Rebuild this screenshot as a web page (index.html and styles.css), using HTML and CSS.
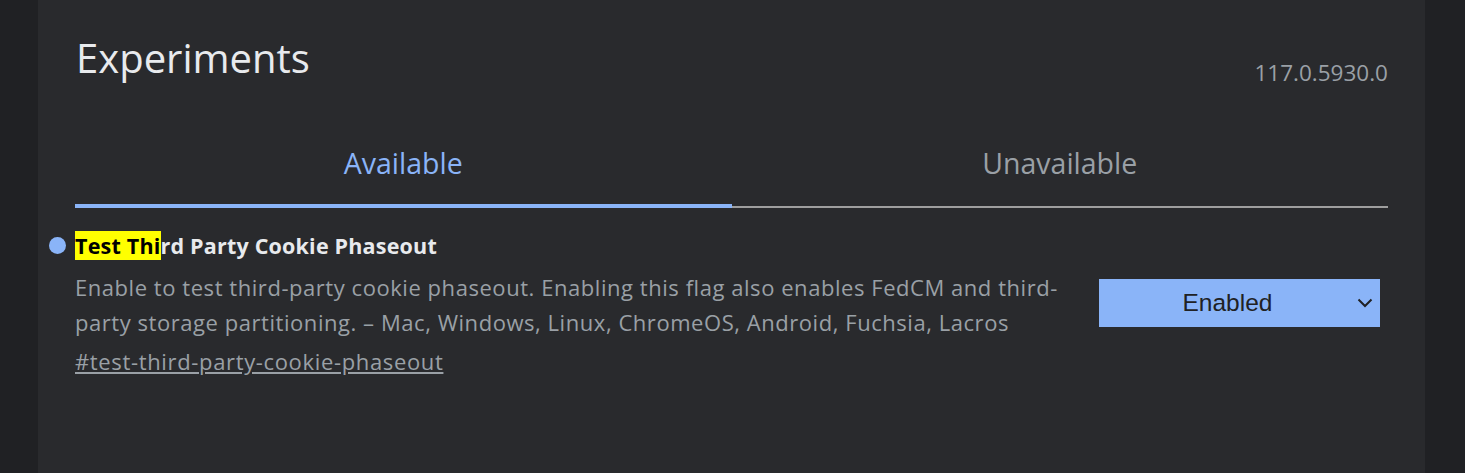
FILE: index.html
```html
<!DOCTYPE html>
<html>
<head>
<meta charset="utf-8">
<link rel="stylesheet" href="styles.css">
</head>
<body>
<div class="page">
  <main class="panel">
    <header class="head">
      <h1 class="title">Experiments</h1>
      <span class="version">117.0.5930.0</span>
    </header>
    <nav class="tabs">
      <div class="tab active">Available</div>
      <div class="tab">Unavailable</div>
    </nav>
    <section class="flag">
      <div class="flag-text">
        <h2 class="flag-name"><span class="dot"></span><mark class="hit">Test Thi</mark>rd Party Cookie Phaseout</h2>
        <p class="desc">Enable to test third-party cookie phaseout. Enabling this flag also enables FedCM and third-party storage partitioning. – Mac, Windows, Linux, ChromeOS, Android, Fuchsia, Lacros</p>
        <a class="perma" href="#">#test-third-party-cookie-phaseout</a>
      </div>
      <div class="select">
        <span class="select-label">Enabled</span>
        <svg class="chev" width="16" height="10" viewBox="0 0 16 10"><path d="M1.5 1.5 L8 8 L14.5 1.5" fill="none" stroke="#202124" stroke-width="2"/></svg>
      </div>
    </section>
  </main>
</div>
</body>
</html>
```
FILE: styles.css
```css
* { box-sizing: border-box; }
html, body { margin: 0; padding: 0; }
body {
  background: #202124;
  font-family: "Open Sans", "Noto Sans", sans-serif;
  height: 473px;
  overflow: hidden;
}
.page {
  display: flex;
  height: 473px;
  padding-left: 38px;
  padding-right: 40px;
}
.panel {
  flex: 1;
  background: #292a2d;
  padding: 30px 37px 0 37px;
}
.head {
  display: flex;
  justify-content: space-between;
  align-items: flex-start;
  padding-left: 1px;
}
.title {
  margin: 0;
  font-weight: 400;
  font-size: 40px;
  line-height: 56px;
  color: #e8eaed;
}
.version {
  margin-top: 28px;
  font-size: 22.5px;
  line-height: 30px;
  color: #9aa0a6;
}
.tabs {
  display: flex;
  margin-top: 55px;
  border-bottom: 2px solid #9e9e9e;
}
.tab {
  flex: 1;
  text-align: center;
  font-size: 28.5px;
  line-height: 40px;
  color: #9aa0a6;
  padding-bottom: 21px;
  margin-bottom: -2px;
  border-bottom: 4px solid transparent;
}
.tab.active {
  color: #8ab4f8;
  border-bottom-color: #8ab4f8;
}
.flag {
  display: flex;
  align-items: flex-start;
  margin-top: 22px;
}
.flag-text {
  flex: 1;
  padding-right: 20px;
}
.flag-name {
  position: relative;
  margin: 0;
  font-size: 21.5px;
  font-weight: 700;
  line-height: 32px;
  color: #e8eaed;
  letter-spacing: 0.2px;
}
.dot {
  position: absolute;
  left: -26px;
  top: 7px;
  width: 17px;
  height: 17px;
  border-radius: 50%;
  background: #8ab4f8;
}
.hit {
  background: #ffff00;
  color: #000;
  padding: 0;
}
.desc {
  margin: 8px 0 0 0;
  font-size: 22px;
  line-height: 35px;
  color: #9aa0a6;
  letter-spacing: 0.55px;
}
.perma {
  display: inline-block;
  margin-top: 6px;
  font-size: 22px;
  line-height: 30px;
  color: #9aa0a6;
  text-decoration: underline;
  letter-spacing: 0.65px;
}
.select {
  width: 281px;
  height: 48px;
  margin-top: 49px;
  margin-right: 8px;
  background: #8ab4f8;
  display: flex;
  align-items: center;
  position: relative;
  justify-content: center;
  padding-right: 24px;
}
.select-label {
  font-family: "Liberation Sans", Arial, sans-serif;
  font-size: 24.5px;
  color: #202124;
}
.chev {
  position: absolute;
  right: 7px;
  top: 19px;
}
```
